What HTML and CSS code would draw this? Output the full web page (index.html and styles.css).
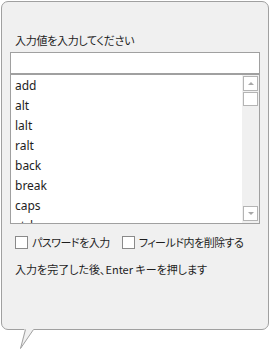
FILE: index.html
```html
<!DOCTYPE html>
<html lang="ja">
<head>
    <meta charset="UTF-8">
    <meta name="viewport" content="width=device-width, initial-scale=1.0">
    <title>入力</title>
    <link rel="stylesheet" href="styles.css">
</head>
<body>
    <div class="popup">
        <div class="bubble">
            <div class="prompt">入力値を入力してください</div>
            <div class="text-input"></div>
            <div class="key-list">
                <ul class="items">
                    <li>add</li>
                    <li>alt</li>
                    <li>lalt</li>
                    <li>ralt</li>
                    <li>back</li>
                    <li>break</li>
                    <li>caps</li>
                    <li>ctrl</li>
                </ul>
                <div class="scrollbar">
                    <div class="sb-btn"><span class="arrow-up"></span></div>
                    <div class="sb-thumb"></div>
                    <div class="sb-track"></div>
                    <div class="sb-btn"><span class="arrow-down"></span></div>
                </div>
            </div>
            <div class="options">
                <label class="option"><span class="check"></span>パスワードを入力</label>
                <label class="option"><span class="check"></span>フィールド内を削除する</label>
            </div>
            <div class="hint">入力を完了した後、Enter キーを押します</div>
        </div>
        <svg class="tail" width="16" height="21" viewBox="0 0 16 21">
            <polygon points="4.5,0 0.5,19.5 14,0" fill="#f0f0f0"/>
            <polyline points="5.5,0.5 0.5,19.5 13.5,0.5" fill="none" stroke="#a0a0a0" stroke-width="1"/>
        </svg>
    </div>
</body>
</html>
```

FILE: styles.css
```css
body {
    margin: 0;
    background: #fff;
    font-family: "Noto Sans CJK JP", sans-serif;
    font-size: 11px;
    color: #1e1e1e;
    font-feature-settings: "palt";
}

.popup {
    display: flex;
    flex-direction: column;
    padding: 1px 0 0 1px;
}

.bubble {
    box-sizing: border-box;
    width: 268px;
    height: 329px;
    padding: 29px 8px 0 8px;
    background: #f0f0f0;
    border: 1px solid #a0a0a0;
    border-radius: 7px;
}

.tail {
    display: block;
    margin: -1px 0 0 19px;
}

.prompt {
    line-height: 18px;
    padding-left: 5px;
    margin-bottom: 3px;
    letter-spacing: -0.3px;
}

.text-input {
    box-sizing: border-box;
    height: 22px;
    background: #fff;
    border: 1px solid #a0a0a0;
}

.key-list {
    display: flex;
    box-sizing: border-box;
    height: 150px;
    background: #fff;
    border: 1px solid #a0a0a0;
    overflow: hidden;
}

.items {
    flex: 1;
    list-style: none;
    margin: 0;
    padding: 1px 0 0 4px;
    font-family: "Noto Sans", sans-serif;
    font-size: 12px;
}

.items li {
    height: 20px;
    line-height: 20px;
}

.scrollbar {
    display: flex;
    flex-direction: column;
    width: 17px;
    padding: 1px 1px 2px 1px;
    box-sizing: border-box;
    background: #f0f0f0;
}

.sb-btn, .sb-thumb {
    box-sizing: border-box;
    width: 15px;
    height: 15px;
    border: 1px solid #b4b4b4;
    background: #fff;
    display: flex;
    align-items: center;
    justify-content: center;
}

.sb-thumb {
    margin-top: 1px;
    height: 14px;
}

.sb-track {
    flex: 1;
}

.arrow-up, .arrow-down {
    width: 0;
    height: 0;
    border-left: 3px solid transparent;
    border-right: 3px solid transparent;
}

.arrow-up {
    border-bottom: 3px solid #a8a8a8;
}

.arrow-down {
    border-top: 3px solid #a8a8a8;
}

.options {
    display: flex;
    gap: 12px;
    margin-top: 9px;
    padding-left: 5px;
    line-height: 18px;
    white-space: nowrap;
    letter-spacing: -0.5px;
}

.option {
    display: flex;
    align-items: center;
}

.check {
    box-sizing: border-box;
    width: 13px;
    height: 13px;
    margin-right: 4px;
    border: 1px solid #8a8a8a;
    background: #fff;
}

.hint {
    margin-top: 9px;
    padding-left: 5px;
    line-height: 18px;
}
```
